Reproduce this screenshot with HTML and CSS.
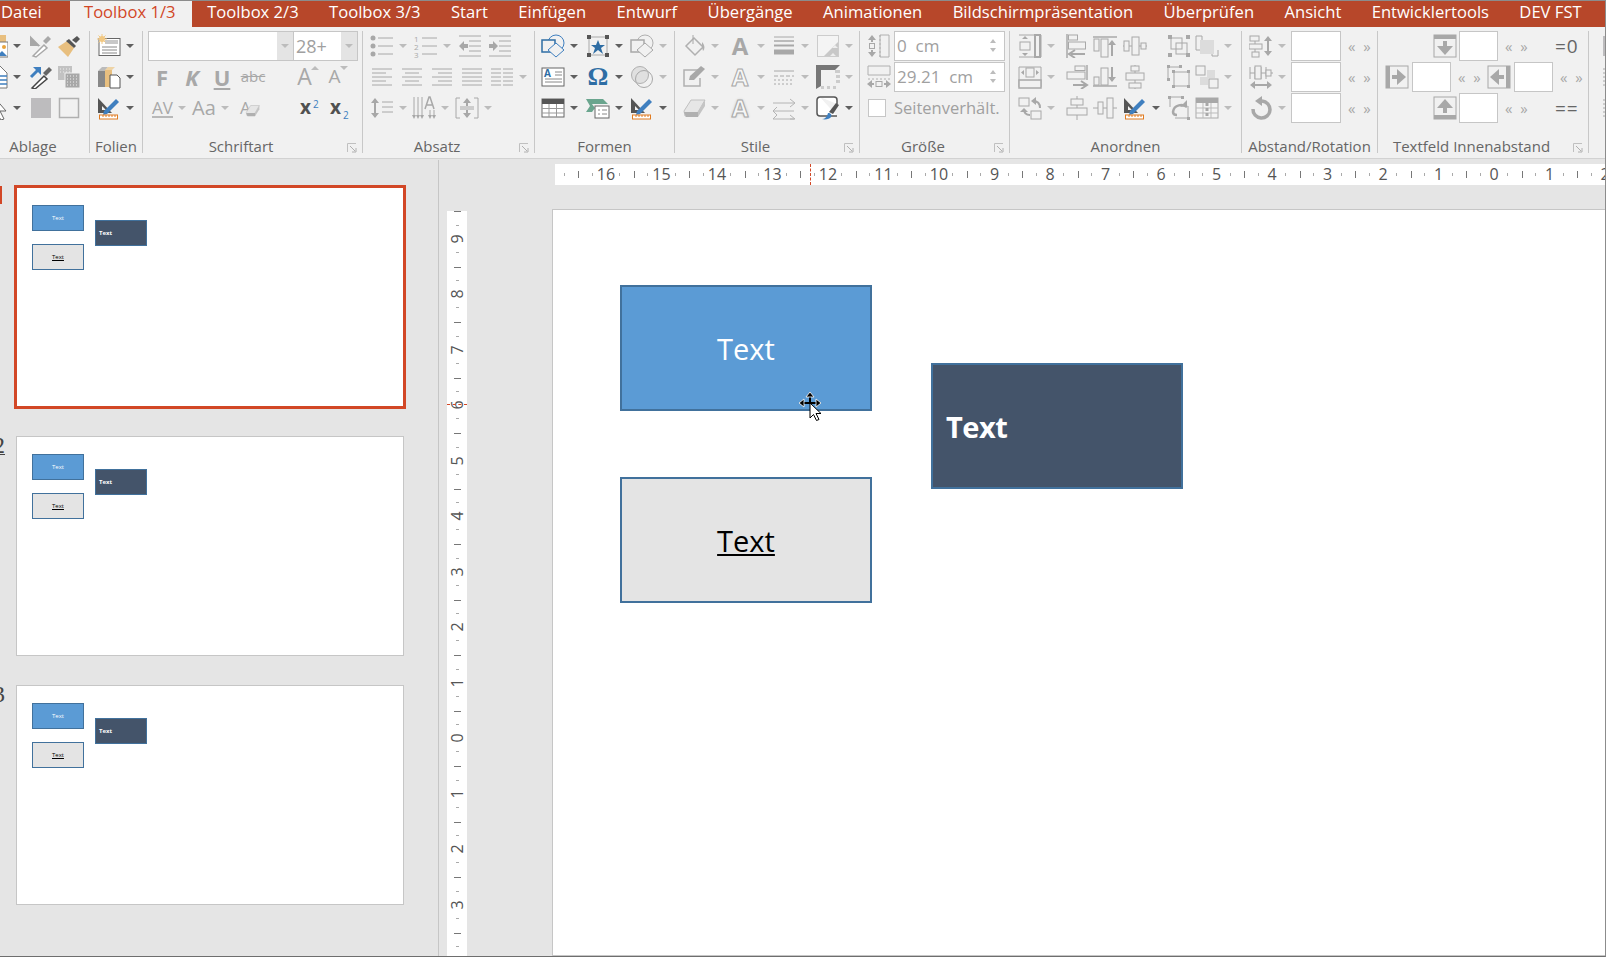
FILE: index.html
```html
<!DOCTYPE html>
<html lang="de">
<head>
    <meta charset="UTF-8">
    <title>Toolbox 1/3</title>
    <link rel="stylesheet" href="styles.css">
</head>
<body>
<svg class="defs" xmlns="http://www.w3.org/2000/svg">
    <!-- Ablage -->
    <symbol id="paste" viewBox="0 0 24 24"><rect x="15" y="1" width="7" height="7" fill="#e8bf7f"/><rect x="10" y="8" width="14" height="15" fill="#fff" stroke="#777"/><circle cx="20" cy="13" r="2" fill="#e8a33d"/><path d="M13 22l5-5 5 5z" fill="#3f7fbf"/></symbol>
    <symbol id="dropgrey" viewBox="0 0 24 24"><path d="M4 22l11-11 3 3L7 23z" fill="#fff" stroke="#a8a8a8" stroke-width="1.5"/><path d="M14 7l3-3 2-2 3 3-2 2-3 3z" fill="#a8a8a8"/><path d="M2 4v7h7L2 4zm2 2l6 6" fill="#a8a8a8" stroke="#a8a8a8" stroke-width="2"/></symbol>
    <symbol id="dropblue" viewBox="0 0 24 24"><path d="M3 23l12-12 3 3L6 24z" fill="#fff" stroke="#444" stroke-width="1.5"/><path d="M14 8l6-6 3 3-6 6z" fill="#666"/><path d="M2 12L10 4" stroke="#3f7fbf" stroke-width="3"/><path d="M4 2h8v8z" fill="#3f7fbf"/></symbol>
    <symbol id="brush" viewBox="0 0 24 24"><path d="M1 13l9-6 7 7-6 9z" fill="#e8bf7f"/><path d="M9 7l3-2 7 7-2 2z" fill="#555"/><path d="M15 6l5-4 3 3-4 4z" fill="#555"/></symbol>
    <symbol id="pattern" viewBox="0 0 24 24"><rect x="1" y="1" width="14" height="14" fill="#c2c2c2"/><rect x="8" y="8" width="15" height="15" fill="#a8a8a8" stroke="#f1f1f1"/><path d="M10 11h11M10 14h11M10 17h11M10 20h11" stroke="#eee" stroke-dasharray="1 2"/><path d="M3 4h10M3 7h10" stroke="#eee" stroke-dasharray="1 2"/></symbol>
    <symbol id="doc" viewBox="0 0 24 24"><path d="M2 1h14l7 7v15H2z" fill="#fff" stroke="#777"/><path d="M13 11h10M13 15h10M13 19h10" stroke="#3f7fbf" stroke-width="1.5"/></symbol>
    <symbol id="cursor" viewBox="0 0 24 24"><path d="M10 1l12 14-6 0 4 8-3 1-5-8-5 5z" fill="#fff" stroke="#666"/><rect x="8" y="0" width="6" height="7" fill="#777"/></symbol>
    <symbol id="sqfill" viewBox="0 0 24 24"><rect x="2" y="2" width="20" height="20" fill="#bdbcbe"/></symbol>
    <symbol id="sqout" viewBox="0 0 24 24"><rect x="2.5" y="2.5" width="19" height="19" fill="none" stroke="#b0b0b0" stroke-width="1.5"/></symbol>
    <!-- Folien -->
    <symbol id="newslide" viewBox="0 0 24 24"><rect x="2" y="4.500" width="21" height="17" fill="#fff" stroke="#666"/><rect x="8" y="6" width="13" height="4" fill="#c8c8c8"/><path d="M5 13h15M5 16h15M5 19h15" stroke="#888"/><circle cx="5" cy="5" r="3" fill="#f2c882"/><path d="M5 0v10M0 5h10M1.500 1.500l7 7M8.500 1.500l-7 7" stroke="#f2c882"/></symbol>
    <symbol id="books" viewBox="0 0 24 24"><rect x="1" y="6" width="7" height="16" fill="#888"/><path d="M1 6l4-4h6l-3 4z" fill="#bbb"/><rect x="8" y="5" width="7" height="17" fill="#e8bf7f"/><path d="M8 5l3-3h7l-3 3z" fill="#eed3a5"/><path d="M13 10h7l3 3v10H13z" fill="#fff" stroke="#555"/></symbol>
    <symbol id="rulerpen" viewBox="0 0 24 24"><path d="M1 2v15h14z" fill="#555"/><path d="M5 10v4h4z" fill="#f1f1f1"/><path d="M7 15L19 3l3 3-12 12-4 1z" fill="#3f7fbf"/><rect x="2.500" y="19" width="18" height="4" fill="#fff" stroke="#e07b20"/><path d="M6 19v2M9 19v2M12 19v2M15 19v2M18 19v2" stroke="#e07b20"/></symbol>
    <!-- Absatz -->
    <symbol id="bullets" viewBox="0 0 24 24"><circle cx="3" cy="4" r="2.500" fill="#a8a8a8"/><circle cx="3" cy="12" r="2.500" fill="#a8a8a8"/><circle cx="3" cy="20" r="2.500" fill="#a8a8a8"/><path d="M8 4h15M8 12h15M8 20h15" stroke="#a8a8a8"/></symbol>
    <symbol id="numbers" viewBox="0 0 24 24"><path d="M8 4h15M8 12h15M8 20h15" stroke="#a8a8a8"/><text x="0" y="8" class="svgnum">1</text><text x="0" y="16" class="svgnum">2</text><text x="0" y="24" class="svgnum">3</text></symbol>
    <symbol id="outdent" viewBox="0 0 24 24"><path d="M1 2h22M11 7h12M11 12h12M11 17h12M1 22h22" stroke="#a8a8a8"/><path d="M1 12l5-5v3h4v4H6v3z" fill="#a8a8a8"/></symbol>
    <symbol id="indent" viewBox="0 0 24 24"><path d="M1 2h22M11 7h12M11 12h12M11 17h12M1 22h22" stroke="#a8a8a8"/><path d="M10 12L5 7v3H1v4h4v3z" fill="#a8a8a8"/></symbol>
    <symbol id="aleft" viewBox="0 0 24 24"><path d="M2 4h20M2 8h14M2 12h20M2 16h14M2 20h20" stroke="#a8a8a8"/></symbol>
    <symbol id="acenter" viewBox="0 0 24 24"><path d="M2 4h20M5 8h14M2 12h20M5 16h14M2 20h20" stroke="#a8a8a8"/></symbol>
    <symbol id="aright" viewBox="0 0 24 24"><path d="M2 4h20M8 8h14M2 12h20M8 16h14M2 20h20" stroke="#a8a8a8"/></symbol>
    <symbol id="ajust" viewBox="0 0 24 24"><path d="M2 4h20M2 8h20M2 12h20M2 16h20M2 20h20" stroke="#a8a8a8"/></symbol>
    <symbol id="acols" viewBox="0 0 24 24"><path d="M1 4h10M13 4h10M1 8h10M13 8h10M1 12h10M13 12h10M1 16h10M13 16h10M1 20h10M13 20h10" stroke="#a8a8a8"/></symbol>
    <symbol id="linesp" viewBox="0 0 24 24"><path d="M5 3v18" stroke="#a8a8a8" stroke-width="2"/><path d="M1 7l4-5 4 5zM1 17l4 5 4-5z" fill="#a8a8a8"/><path d="M12 6h11M12 11h11M12 16h11" stroke="#a8a8a8"/></symbol>
    <symbol id="textdir" viewBox="0 0 24 24"><path d="M2 1v20M6 1v20M10 1v20M18 14v7M22 14v7" stroke="#a8a8a8"/><path d="M0 19l2 4 2-4zM4 19l2 4 2-4zM8 19l2 4 2-4zM16 19l2 4 2-4zM20 19l2 4 2-4z" fill="#a8a8a8"/><path d="M13 13l4-12h1l4 12M15 9h6" fill="none" stroke="#a8a8a8" stroke-width="1.500"/></symbol>
    <symbol id="valign" viewBox="0 0 24 24"><path d="M5 2H1v20h4M19 2h4v20h-4" fill="none" stroke="#a8a8a8"/><path d="M12 3v7M12 14v7" stroke="#a8a8a8" stroke-width="2"/><path d="M8 7l4-5 4 5zM8 17l4 5 4-5z" fill="#a8a8a8"/><path d="M5 11h14M5 13h14" stroke="#a8a8a8"/></symbol>
    <!-- Formen -->
    <symbol id="shapes" viewBox="0 0 24 24"><circle cx="15" cy="9" r="8" fill="none" stroke="#3f7fbf"/><rect x="1" y="6" width="13" height="12" fill="#f1f1f1" stroke="#2e6da4" stroke-width="1.500"/><path d="M15 9l8 7-8 7-8-7z" fill="#f1f1f1" stroke="#3f7fbf"/></symbol>
    <symbol id="star" viewBox="0 0 24 24"><rect x="3" y="3" width="18" height="18" fill="none" stroke="#aaa"/><path d="M12 6l2 5h5l-4 3 2 6-5-4-5 4 2-6-4-3h5z" fill="#2e6da4"/><path d="M1 1h4v4H1zM19 1h4v4h-4zM1 19h4v4H1zM19 19h4v4h-4z" fill="#555"/></symbol>
    <symbol id="shapesoff" viewBox="0 0 24 24"><circle cx="15" cy="9" r="8" fill="none" stroke="#b0b0b0"/><rect x="1" y="6" width="13" height="12" fill="#f1f1f1" stroke="#a8a8a8" stroke-width="1.500"/><path d="M15 9l8 7-8 7-8-7z" fill="#f1f1f1" stroke="#a8a8a8"/></symbol>
    <symbol id="textbox" viewBox="0 0 24 24"><rect x="1" y="3" width="22" height="18" fill="#fff" stroke="#666"/><path d="M14 7h7M14 10h7M4 14h17M4 17h17" stroke="#888"/><text x="3" y="12" class="svga">A</text></symbol>
    <symbol id="circles" viewBox="0 0 24 24"><circle cx="10" cy="10" r="8.500" fill="#e0e0e0" stroke="#b0b0b0"/><circle cx="14" cy="14" r="8.500" fill="none" stroke="#a8a8a8"/></symbol>
    <symbol id="table" viewBox="0 0 24 24"><rect x="1" y="3" width="22" height="18" fill="#fff" stroke="#666"/><rect x="1" y="3" width="22" height="5" fill="#555"/><path d="M1 12.500h22M1 17h22M8 8v13M15.500 8v13" stroke="#999"/></symbol>
    <symbol id="action" viewBox="0 0 24 24"><path d="M0 3h17l5 5H6l3 4-3 4H0l4-6z" fill="#6aa58e"/><rect x="9" y="10" width="14" height="12" fill="#fff" stroke="#666"/><path d="M12 14h2M16 14h5M12 18h2M16 18h5" stroke="#888"/></symbol>
    <!-- Stile -->
    <symbol id="bucket" viewBox="0 0 24 24"><path d="M12 4l9 9-8 8-9-9z" fill="#f1f1f1" stroke="#b0b0b0" stroke-width="1.500"/><path d="M11 1v9" stroke="#a8a8a8"/><path d="M20 8c3 3 3 7 1 9-1-3-1-6-1-9z" fill="#b0b0b0"/></symbol>
    <symbol id="lines" viewBox="0 0 24 24"><path d="M2 3h20" stroke="#a8a8a8"/><path d="M2 7h20" stroke="#a8a8a8" stroke-width="1.500"/><path d="M2 11.500h20" stroke="#a8a8a8" stroke-width="2"/><path d="M2 18h20" stroke="#a8a8a8" stroke-width="5"/></symbol>
    <symbol id="gradient" viewBox="0 0 24 24"><rect x="1.500" y="1.500" width="21" height="21" fill="#f4f4f4" stroke="#ccc"/><path d="M8 22l14-14v14z" fill="#c8c8c8"/><path d="M14 22l3-3 3 3zM16 14l3-3 3 3z" fill="#eee"/></symbol>
    <symbol id="pen" viewBox="0 0 24 24"><path d="M17 5H2v16h16v-8" fill="none" stroke="#b0b0b0" stroke-width="1.500"/><path d="M7 15l1-4L19 1l4 3-11 11z" fill="#a8a8a8"/></symbol>
    <symbol id="dashes" viewBox="0 0 24 24"><path d="M2 6h20" stroke="#a8a8a8"/><path d="M2 11h20" stroke="#a8a8a8" stroke-dasharray="4 2"/><path d="M2 15h20M2 19h20" stroke="#a8a8a8" stroke-dasharray="2 2"/></symbol>
    <symbol id="shadowbox" viewBox="0 0 24 24"><path d="M0 0h24l-5 5H5v16l-5 3z" fill="#777"/><path d="M19 5h5v3h-5zM20 10h4v3h-4zM20 15h4v3h-4zM5 21h3v3H5zM11 21h3v3h-3zM17 21h3v3h-3z" fill="#ccc"/></symbol>
    <symbol id="eraser" viewBox="0 0 24 24"><path d="M2 15L9 4h14l-7 12v4H3z" fill="#e6e6e6" stroke="#c0c0c0"/><path d="M2 16h14v5H4z" fill="#b0b0b0"/><path d="M16 16l7-12v6l-7 11z" fill="#c4c4c4"/></symbol>
    <symbol id="arrows" viewBox="0 0 24 24"><path d="M1 7h21M18 3l5 4-5 4M5 11L1 15l4 4M1 15h21M1 23h21M5 19l-4 4M18 19l5 4-5 0" fill="none" stroke="#b4b4b4"/></symbol>
    <symbol id="shapestyle" viewBox="0 0 24 24"><path d="M4 1h14a3 3 0 0 1 3 3v4M21 20H4a3 3 0 0 1-3-3V4a3 3 0 0 1 3-3" fill="#fff" stroke="#555" stroke-width="1.500"/><path d="M13 16l7-9 3 2-6 9z" fill="#555"/><path d="M6 23c3 0 5-2 6-6 3 0 4 2 3 4-1 2-6 3-9 2z" fill="#3f7fbf"/></symbol>
    <!-- Groesse -->
    <symbol id="sizeh" viewBox="0 0 24 24"><path d="M13 1h9v22h-9z" fill="none" stroke="#b0b0b0"/><path d="M13 1v22" stroke="#b0b0b0" stroke-dasharray="2 2"/><path d="M5 3v5M5 16v5" stroke="#a8a8a8" stroke-width="2"/><path d="M1 6l4-5 4 5zM1 18l4 5 4-5z" fill="#a8a8a8"/><rect x="2.500" y="9.500" width="5" height="5" fill="none" stroke="#a8a8a8"/></symbol>
    <symbol id="sizew" viewBox="0 0 24 24"><path d="M1 1h22v9H1z" fill="none" stroke="#b0b0b0"/><path d="M1 14h22" stroke="#b0b0b0" stroke-dasharray="2 2"/><path d="M3 19h4M17 19h4" stroke="#a8a8a8" stroke-width="2"/><path d="M5 15l-5 4 5 4zM19 15l5 4-5 4z" fill="#a8a8a8"/><rect x="9" y="16.500" width="6" height="5" fill="none" stroke="#a8a8a8"/></symbol>
    <!-- Anordnen -->
    <symbol id="an1" viewBox="0 0 24 24"><path d="M1 1h22v22H1" fill="none" stroke="#a8a8a8"/><path d="M17 1h5v22h-5z" fill="none" stroke="#a8a8a8" stroke-width="2"/><rect x="2" y="8" width="10" height="8" fill="none" stroke="#a8a8a8"/><path d="M4 5l3-3 3 3zM4 19l3 3 3-3z" fill="#a8a8a8"/></symbol>
    <symbol id="an2" viewBox="0 0 24 24"><path d="M2 0v24" stroke="#a8a8a8" stroke-width="1.500"/><rect x="3.500" y="1" width="9" height="5" fill="none" stroke="#a8a8a8"/><rect x="3.500" y="8" width="17" height="7" fill="none" stroke="#a8a8a8"/><path d="M6 20h14" stroke="#a8a8a8" stroke-width="2"/><path d="M10 16l-6 4 6 4" fill="none" stroke="#a8a8a8" stroke-width="2"/></symbol>
    <symbol id="an3" viewBox="0 0 24 24"><path d="M0 3h24" stroke="#a8a8a8" stroke-width="1.500"/><rect x="1" y="5" width="5" height="12" fill="none" stroke="#a8a8a8"/><rect x="8" y="5" width="7" height="18" fill="none" stroke="#a8a8a8"/><path d="M19 8v14" stroke="#a8a8a8" stroke-width="2"/><path d="M15 11l4-5 4 5z" fill="#a8a8a8"/></symbol>
    <symbol id="an4" viewBox="0 0 24 24"><path d="M0 12h24" stroke="#a8a8a8"/><rect x="1" y="7" width="5" height="10" fill="#f1f1f1" stroke="#a8a8a8"/><rect x="9" y="3" width="7" height="18" fill="#f1f1f1" stroke="#a8a8a8"/><rect x="18" y="9" width="5" height="6" fill="#f1f1f1" stroke="#a8a8a8"/></symbol>
    <symbol id="an5" viewBox="0 0 24 24"><rect x="1" y="1" width="4" height="4" fill="#a8a8a8"/><rect x="19" y="1" width="4" height="4" fill="#a8a8a8"/><rect x="1" y="19" width="4" height="4" fill="#a8a8a8"/><rect x="19" y="19" width="4" height="4" fill="#a8a8a8"/><rect x="4" y="4" width="11" height="11" fill="none" stroke="#a8a8a8"/><rect x="9" y="9" width="11" height="11" fill="none" stroke="#a8a8a8"/></symbol>
    <symbol id="an6" viewBox="0 0 24 24"><path d="M7 8V2H1v14h5M17 16v6h6v-6" fill="none" stroke="#a8a8a8"/><rect x="5" y="6" width="14" height="14" fill="#dcdcdc"/></symbol>
    <symbol id="an7" viewBox="0 0 24 24"><path d="M1 2h22M1 2v20M23 2v20" fill="none" stroke="#a8a8a8"/><rect x="1" y="15" width="22" height="8" fill="#f1f1f1" stroke="#a8a8a8" stroke-width="1.500"/><rect x="8" y="3" width="8" height="9" fill="none" stroke="#a8a8a8"/><path d="M6 5L3 7.500 6 10zM18 5l3 2.500L18 10z" fill="#a8a8a8"/></symbol>
    <symbol id="an8" viewBox="0 0 24 24"><path d="M22 0v15" stroke="#a8a8a8" stroke-width="1.500"/><rect x="10" y="1" width="10" height="4.500" fill="none" stroke="#a8a8a8"/><rect x="2" y="7" width="18" height="7" fill="none" stroke="#a8a8a8"/><path d="M8 20h14" stroke="#a8a8a8" stroke-width="2"/><path d="M16 16l6 4-6 4" fill="none" stroke="#a8a8a8" stroke-width="2"/></symbol>
    <symbol id="an9" viewBox="0 0 24 24"><path d="M0 21h24" stroke="#a8a8a8" stroke-width="1.500"/><rect x="1" y="12" width="5" height="8" fill="none" stroke="#a8a8a8"/><rect x="8" y="3" width="7" height="17" fill="none" stroke="#a8a8a8"/><path d="M19 2v14" stroke="#a8a8a8" stroke-width="2"/><path d="M15 12l4 5 4-5z" fill="#a8a8a8"/></symbol>
    <symbol id="an10" viewBox="0 0 24 24"><path d="M12 0v24" stroke="#a8a8a8"/><rect x="8" y="1" width="8" height="5" fill="#f1f1f1" stroke="#a8a8a8"/><rect x="3" y="8" width="18" height="7" fill="#f1f1f1" stroke="#a8a8a8"/><rect x="6" y="18" width="12" height="5" fill="#f1f1f1" stroke="#a8a8a8"/></symbol>
    <symbol id="an11" viewBox="0 0 24 24"><path d="M1 2v12M1 2h12" fill="none" stroke="#a8a8a8"/><rect x="7" y="7" width="15" height="14" fill="none" stroke="#a8a8a8"/><rect x="0" y="0" width="3" height="3" fill="#a8a8a8"/><rect x="12" y="0" width="3" height="3" fill="#a8a8a8"/><rect x="0" y="13" width="3" height="3" fill="#a8a8a8"/><rect x="5" y="5" width="3" height="3" fill="#a8a8a8"/><rect x="20" y="5" width="3" height="3" fill="#a8a8a8"/><rect x="5" y="20" width="3" height="3" fill="#a8a8a8"/><rect x="20" y="20" width="3" height="3" fill="#a8a8a8"/></symbol>
    <symbol id="an12" viewBox="0 0 24 24"><rect x="1" y="1" width="9" height="9" fill="none" stroke="#a8a8a8"/><rect x="12" y="5" width="8" height="8" fill="#dcdcdc"/><rect x="5" y="12" width="8" height="8" fill="#dcdcdc"/><rect x="14" y="14" width="9" height="9" fill="none" stroke="#a8a8a8"/></symbol>
    <symbol id="an13" viewBox="0 0 24 24"><rect x="1" y="2" width="10" height="8" fill="none" stroke="#a8a8a8"/><rect x="13" y="15" width="10" height="8" fill="none" stroke="#a8a8a8"/><path d="M22 12c0-5-3-7-7-7M6 13c0 4 2 6 6 6" fill="none" stroke="#a8a8a8" stroke-width="2"/><path d="M18 1l-5 4 5 4zM2 16h8l-4-4z" fill="#a8a8a8"/></symbol>
    <symbol id="an14" viewBox="0 0 24 24"><path d="M12 0v24" stroke="#a8a8a8"/><rect x="6" y="3" width="12" height="6" fill="#f1f1f1" stroke="#a8a8a8"/><rect x="2" y="12" width="20" height="7" fill="#f1f1f1" stroke="#a8a8a8"/></symbol>
    <symbol id="an15" viewBox="0 0 24 24"><path d="M0 12h24" stroke="#a8a8a8"/><rect x="5" y="6" width="5" height="12" fill="#f1f1f1" stroke="#a8a8a8"/><rect x="14" y="2" width="6" height="20" fill="#f1f1f1" stroke="#a8a8a8"/></symbol>
    <symbol id="an16" viewBox="0 0 24 24"><path d="M3 1h12M3 1v10M21 10v12H8" fill="none" stroke="#a8a8a8"/><path d="M20 11c-4-3-13-3-14 5 0 2 2 3 4 3" fill="none" stroke="#a8a8a8" stroke-width="2.500"/><path d="M13 11l7-1v-6z" fill="#a8a8a8"/><rect x="1" y="0" width="3" height="3" fill="#a8a8a8"/><rect x="14" y="0" width="3" height="3" fill="#a8a8a8"/><rect x="20" y="21" width="3" height="3" fill="#a8a8a8"/></symbol>
    <symbol id="an17" viewBox="0 0 24 24"><rect x="1" y="2" width="22" height="20" fill="#f4f4f4" stroke="#aaa"/><rect x="1" y="2" width="22" height="5" fill="#a8a8a8"/><path d="M1 12h22M1 17h22M8 7v15M16 7v15" stroke="#bbb"/><path d="M12 7v15" stroke="#a8a8a8" stroke-width="3" stroke-dasharray="3 2"/></symbol>
    <!-- Abstand/Rotation -->
    <symbol id="sp1" viewBox="0 0 24 24"><rect x="1" y="2" width="9" height="5" fill="none" stroke="#a8a8a8"/><rect x="0" y="10" width="13" height="5" fill="none" stroke="#a8a8a8"/><rect x="3" y="18" width="7" height="5" fill="none" stroke="#a8a8a8"/><path d="M6 7v3M6 15v3" stroke="#a8a8a8"/><path d="M19 4v16" stroke="#a8a8a8" stroke-width="2"/><path d="M15 7l4-5 4 5zM15 17l4 5 4-5z" fill="#a8a8a8"/></symbol>
    <symbol id="sp2" viewBox="0 0 24 24"><path d="M1 2v12M6 2v12M12 2v12M17 2v12M1 8h23" stroke="#a8a8a8" fill="none"/><rect x="6" y="1" width="6" height="13" fill="#f1f1f1" stroke="#a8a8a8"/><rect x="17" y="5" width="5" height="6" fill="#f1f1f1" stroke="#a8a8a8"/><path d="M3 20h18" stroke="#a8a8a8" stroke-width="2"/><path d="M6 16l-5 4 5 4zM18 16l5 4-5 4z" fill="#a8a8a8"/></symbol>
    <symbol id="rotate" viewBox="0 0 24 24"><path d="M13 5a8.500 8.500 0 1 1-9 8" fill="none" stroke="#a8a8a8" stroke-width="3.500"/><path d="M13 0v10l-7-5z" fill="#a8a8a8"/></symbol>
    <!-- Textfeld -->
    <symbol id="pdown" viewBox="0 0 24 24"><rect x="1" y="1" width="22" height="22" fill="#f1f1f1" stroke="#a8a8a8"/><rect x="1" y="1" width="22" height="4" fill="#a8a8a8"/><path d="M12 7v9" stroke="#a8a8a8" stroke-width="4"/><path d="M4 12l8 9 8-9" fill="#a8a8a8"/></symbol>
    <symbol id="pup" viewBox="0 0 24 24"><rect x="1" y="1" width="22" height="22" fill="#f1f1f1" stroke="#a8a8a8"/><rect x="1" y="19" width="22" height="4" fill="#a8a8a8"/><path d="M12 8v9" stroke="#a8a8a8" stroke-width="4"/><path d="M4 12l8-9 8 9" fill="#a8a8a8"/></symbol>
    <symbol id="pright" viewBox="0 0 24 24"><rect x="1" y="1" width="22" height="22" fill="#f1f1f1" stroke="#a8a8a8"/><rect x="1" y="1" width="4" height="22" fill="#a8a8a8"/><path d="M7 12h9" stroke="#a8a8a8" stroke-width="4"/><path d="M12 4l9 8-9 8" fill="#a8a8a8"/></symbol>
    <symbol id="pleft" viewBox="0 0 24 24"><rect x="1" y="1" width="22" height="22" fill="#f1f1f1" stroke="#a8a8a8"/><rect x="19" y="1" width="4" height="22" fill="#a8a8a8"/><path d="M8 12h9" stroke="#a8a8a8" stroke-width="4"/><path d="M12 4l-9 8 9 8" fill="#a8a8a8"/></symbol>
    <symbol id="launch" viewBox="0 0 10 10"><path d="M.5 9V.5H9" fill="none" stroke="#c0c0c0"/><path d="M3 3l5 5M9 5v4H5" fill="none" stroke="#b0b0b0"/></symbol>
</svg>

<div class="app">
    <!-- Tabs -->
    <div class="tabs">
        <span class="tab first">Datei</span>
        <span class="tab active">Toolbox 1/3</span>
        <span class="tab">Toolbox 2/3</span>
        <span class="tab">Toolbox 3/3</span>
        <span class="tab">Start</span>
        <span class="tab">Einfügen</span>
        <span class="tab">Entwurf</span>
        <span class="tab">Übergänge</span>
        <span class="tab">Animationen</span>
        <span class="tab">Bildschirmpräsentation</span>
        <span class="tab">Überprüfen</span>
        <span class="tab">Ansicht</span>
        <span class="tab">Entwicklertools</span>
        <span class="tab">DEV FST</span>
    </div>

    <!-- Ribbon -->
    <div class="ribbon">
        <div class="grp g-ablage">
            <div class="r"><span class="b"><svg class="i"><use href="#paste"/></svg><i class="c"></i></span><span class="b"><svg class="i"><use href="#dropgrey"/></svg></span><span class="b"><svg class="i"><use href="#brush"/></svg></span></div>
            <div class="r"><span class="b"><svg class="i"><use href="#doc"/></svg><i class="c"></i></span><span class="b"><svg class="i"><use href="#dropblue"/></svg></span><span class="b"><svg class="i"><use href="#pattern"/></svg></span></div>
            <div class="r"><span class="b"><svg class="i"><use href="#cursor"/></svg><i class="c"></i></span><span class="b"><svg class="i"><use href="#sqfill"/></svg></span><span class="b"><svg class="i"><use href="#sqout"/></svg></span></div>
            <div class="label ls">Ablage</div>
        </div>

        <div class="grp g-folien">
            <div class="r"><span class="b"><svg class="i"><use href="#newslide"/></svg><i class="c"></i></span></div>
            <div class="r"><span class="b"><svg class="i"><use href="#books"/></svg><i class="c"></i></span></div>
            <div class="r"><span class="b"><svg class="i"><use href="#rulerpen"/></svg><i class="c"></i></span></div>
            <div class="label">Folien</div>
        </div>

        <div class="grp g-schrift">
            <div class="r combo-row">
                <div class="combo wide"><span class="combo-text"></span><span class="combo-arrow"><i class="c off"></i></span></div>
                <div class="combo size"><span class="combo-text">28+</span><span class="combo-arrow"><i class="c off"></i></span></div>
            </div>
            <div class="r row2">
                <span class="b"><span class="t bold f22">F</span></span>
                <span class="b"><span class="t bold ital f22">K</span></span>
                <span class="b"><span class="t bold under f22">U</span></span>
                <span class="b"><span class="t strike f15">abc</span></span>
                <span></span>
                <span class="b"><span class="t f23">A</span><i class="c-up"></i></span>
                <span class="b"><span class="t f19">A</span><i class="c-down"></i></span>
            </div>
            <div class="r row3">
                <span class="b"><span class="t av f17">AV</span><i class="c off"></i></span>
                <span class="b"><span class="t f20">Aa</span><i class="c off"></i></span>
                <span class="b"><span class="t f17">A</span><svg class="erase-mini"><use href="#eraser"/></svg></span>
                <span class="b"><span class="t bold dark f19">x</span><sup class="idx">2</sup></span>
                <span class="b"><span class="t bold dark f19">x</span><sub class="idx">2</sub></span>
            </div>
            <div class="label ls">Schriftart</div>
            <svg class="launch"><use href="#launch"/></svg>
        </div>

        <div class="grp g-absatz">
            <div class="r row1">
                <span class="b"><svg class="i"><use href="#bullets"/></svg><i class="c off"></i></span>
                <span class="b"><svg class="i"><use href="#numbers"/></svg><i class="c off"></i></span>
                <span class="b"><svg class="i"><use href="#outdent"/></svg></span>
                <span class="b"><svg class="i"><use href="#indent"/></svg></span>
            </div>
            <div class="r row2">
                <span class="b"><svg class="i"><use href="#aleft"/></svg></span>
                <span class="b"><svg class="i"><use href="#acenter"/></svg></span>
                <span class="b"><svg class="i"><use href="#aright"/></svg></span>
                <span class="b"><svg class="i"><use href="#ajust"/></svg></span>
                <span class="b"><svg class="i"><use href="#acols"/></svg><i class="c off"></i></span>
            </div>
            <div class="r row3">
                <span class="b"><svg class="i"><use href="#linesp"/></svg><i class="c off"></i></span>
                <span class="b"><svg class="i"><use href="#textdir"/></svg><i class="c off"></i></span>
                <span class="b"><svg class="i"><use href="#valign"/></svg><i class="c off"></i></span>
            </div>
            <div class="label ls">Absatz</div>
            <svg class="launch"><use href="#launch"/></svg>
        </div>

        <div class="grp g-formen">
            <div class="r"><span class="b"><svg class="i"><use href="#shapes"/></svg><i class="c"></i></span><span class="b"><svg class="i"><use href="#star"/></svg><i class="c"></i></span><span class="b"><svg class="i"><use href="#shapesoff"/></svg><i class="c off"></i></span></div>
            <div class="r"><span class="b"><svg class="i"><use href="#textbox"/></svg><i class="c"></i></span><span class="b"><span class="omega">Ω</span><i class="c"></i></span><span class="b"><svg class="i"><use href="#circles"/></svg><i class="c off"></i></span></div>
            <div class="r"><span class="b"><svg class="i"><use href="#table"/></svg><i class="c"></i></span><span class="b"><svg class="i"><use href="#action"/></svg><i class="c"></i></span><span class="b"><svg class="i"><use href="#rulerpen"/></svg><i class="c"></i></span></div>
            <div class="label">Formen</div>
        </div>

        <div class="grp g-stile">
            <div class="r"><span class="b"><svg class="i"><use href="#bucket"/></svg><i class="c off"></i></span><span class="b"><span class="bigA solid">A</span><i class="c off"></i></span><span class="b"><svg class="i"><use href="#lines"/></svg><i class="c off"></i></span><span class="b"><svg class="i"><use href="#gradient"/></svg><i class="c off"></i></span></div>
            <div class="r"><span class="b"><svg class="i"><use href="#pen"/></svg><i class="c off"></i></span><span class="b"><span class="bigA outline">A</span><i class="c off"></i></span><span class="b"><svg class="i"><use href="#dashes"/></svg><i class="c off"></i></span><span class="b"><svg class="i"><use href="#shadowbox"/></svg><i class="c off"></i></span></div>
            <div class="r"><span class="b"><svg class="i"><use href="#eraser"/></svg><i class="c off"></i></span><span class="b"><span class="bigA outline glow">A</span><i class="c off"></i></span><span class="b"><svg class="i"><use href="#arrows"/></svg><i class="c off"></i></span><span class="b"><svg class="i"><use href="#shapestyle"/></svg><i class="c"></i></span></div>
            <div class="label ls">Stile</div>
            <svg class="launch"><use href="#launch"/></svg>
        </div>

        <div class="grp g-groesse">
            <div class="r"><span class="b"><svg class="i"><use href="#sizeh"/></svg></span><div class="spin"><span>0&nbsp;&nbsp;cm</span><span class="spin-btns"><i class="c-up off"></i><i class="c off"></i></span></div></div>
            <div class="r"><span class="b"><svg class="i"><use href="#sizew"/></svg></span><div class="spin"><span>29.21&nbsp;&nbsp;cm</span><span class="spin-btns"><i class="c-up off"></i><i class="c off"></i></span></div></div>
            <div class="r"><span class="b"><span class="check"></span></span><span class="keep">Seitenverhält.</span></div>
            <div class="label ls">Größe</div>
            <svg class="launch"><use href="#launch"/></svg>
        </div>

        <div class="grp g-anordnen">
            <div class="r"><span class="b"><svg class="i"><use href="#an1"/></svg><i class="c off"></i></span><span class="b"><svg class="i"><use href="#an2"/></svg></span><span class="b"><svg class="i"><use href="#an3"/></svg></span><span class="b"><svg class="i"><use href="#an4"/></svg></span><span class="b"><svg class="i"><use href="#an5"/></svg></span><span class="b"><svg class="i"><use href="#an6"/></svg><i class="c off"></i></span></div>
            <div class="r"><span class="b"><svg class="i"><use href="#an7"/></svg><i class="c off"></i></span><span class="b"><svg class="i"><use href="#an8"/></svg></span><span class="b"><svg class="i"><use href="#an9"/></svg></span><span class="b"><svg class="i"><use href="#an10"/></svg></span><span class="b"><svg class="i"><use href="#an11"/></svg></span><span class="b"><svg class="i"><use href="#an12"/></svg><i class="c off"></i></span></div>
            <div class="r"><span class="b"><svg class="i"><use href="#an13"/></svg><i class="c off"></i></span><span class="b"><svg class="i"><use href="#an14"/></svg></span><span class="b"><svg class="i"><use href="#an15"/></svg></span><span class="b"><svg class="i"><use href="#rulerpen"/></svg><i class="c"></i></span><span class="b"><svg class="i"><use href="#an16"/></svg></span><span class="b"><svg class="i"><use href="#an17"/></svg><i class="c off"></i></span></div>
            <div class="label">Anordnen</div>
        </div>

        <div class="grp g-abstand">
            <div class="r"><span class="b"><svg class="i"><use href="#sp1"/></svg><i class="c off"></i></span><span class="box"></span><span class="step">«&nbsp;&nbsp;»</span></div>
            <div class="r"><span class="b"><svg class="i"><use href="#sp2"/></svg><i class="c off"></i></span><span class="box"></span><span class="step">«&nbsp;&nbsp;»</span></div>
            <div class="r"><span class="b"><svg class="i"><use href="#rotate"/></svg><i class="c off"></i></span><span class="box"></span><span class="step">«&nbsp;&nbsp;»</span></div>
            <div class="label">Abstand/Rotation</div>
        </div>

        <div class="grp g-textfeld">
            <div class="r row-a"><svg class="i"><use href="#pdown"/></svg><span class="box"></span><span class="step">«&nbsp;&nbsp;»</span><span class="eq">=0</span></div>
            <div class="r row-b"><svg class="i"><use href="#pright"/></svg><span class="box"></span><span class="step">«&nbsp;&nbsp;»</span><svg class="i"><use href="#pleft"/></svg><span class="box"></span><span class="step">«&nbsp;&nbsp;»</span></div>
            <div class="r row-a"><svg class="i"><use href="#pup"/></svg><span class="box"></span><span class="step">«&nbsp;&nbsp;»</span><span class="eq">==</span></div>
            <div class="label ls">Textfeld Innenabstand</div>
            <svg class="launch"><use href="#launch"/></svg>
        </div>

        <div class="grp g-rest">
            <div class="r"><svg class="i"><use href="#sqfill"/></svg></div>
            <div class="r"><svg class="i"><use href="#aleft"/></svg></div>
            <div class="r"><svg class="i"><use href="#aleft"/></svg></div>
        </div>
    </div>

    <div class="main">
        <!-- Folien-Vorschau -->
        <div class="pane">
            <div class="thumb sel">
                <span class="num cur"></span>
                <div class="shape blue mini s1">Text</div>
                <div class="shape dark mini s2">Text</div>
                <div class="shape grey mini s3">Text</div>
            </div>
            <div class="thumb">
                <span class="num under">2</span>
                <div class="shape blue mini s1">Text</div>
                <div class="shape dark mini s2">Text</div>
                <div class="shape grey mini s3">Text</div>
            </div>
            <div class="thumb">
                <span class="num">3</span>
                <div class="shape blue mini s1">Text</div>
                <div class="shape dark mini s2">Text</div>
                <div class="shape grey mini s3">Text</div>
            </div>
        </div>

        <!-- Arbeitsbereich -->
        <div class="editor">
            <div class="hruler">
                <div class="hruler-track">
                    <span class="tick"></span><span class="tick">16</span><span class="tick">15</span><span class="tick">14</span><span class="tick">13</span><span class="tick">12</span><span class="tick">11</span><span class="tick">10</span><span class="tick">9</span><span class="tick">8</span><span class="tick">7</span><span class="tick">6</span><span class="tick">5</span><span class="tick">4</span><span class="tick">3</span><span class="tick">2</span><span class="tick">1</span><span class="tick">0</span><span class="tick">1</span><span class="tick">2</span>
                </div>
                <i class="hmark"></i>
            </div>
            <div class="work">
                <div class="vruler">
                    <span class="vtick"><b>9</b></span><span class="vtick"><b>8</b></span><span class="vtick"><b>7</b></span><span class="vtick"><b>6</b></span><span class="vtick"><b>5</b></span><span class="vtick"><b>4</b></span><span class="vtick"><b>3</b></span><span class="vtick"><b>2</b></span><span class="vtick"><b>1</b></span><span class="vtick"><b>0</b></span><span class="vtick"><b>1</b></span><span class="vtick"><b>2</b></span><span class="vtick"><b>3</b></span><span class="vtick"></span>
                    <i class="vmark"></i>
                </div>
                <div class="slide">
                    <div class="shape blue big b1">Text</div>
                    <div class="shape dark big b2">Text</div>
                    <div class="shape grey big b3">Text</div>
                    <svg class="pointer" width="24" height="34" viewBox="0 0 24 34">
                        <path d="M12 5v7M5 12h14" stroke="#000" stroke-width="2"/>
                        <path d="M12 1l4 5H8zM1 12l5-4v8zM23 12l-5-4v8z" fill="#000" stroke="#fff" stroke-width=".8"/>
                        <path d="M12 12v15l3.500-3.500 3 6 2.500-1-3-6h5z" fill="#fff" stroke="#000"/>
                    </svg>
                </div>
            </div>
        </div>
    </div>
</div>
</body>
</html>
```

FILE: styles.css
```css
html, body {
    margin: 0;
    padding: 0;
}
body {
    width: 1606px;
    height: 957px;
    overflow: hidden;
    font-family: "Open Sans", "Noto Sans", sans-serif;
    background-color: #e5e5e5;
}
.defs {
    display: none;
}
.svgnum {
    font-family: "Open Sans", sans-serif;
    font-size: 8px;
    fill: #a8a8a8;
}
.svga {
    font-family: "Open Sans", sans-serif;
    font-size: 10px;
    font-weight: bold;
    fill: #2e6da4;
}
.app {
    box-sizing: border-box;
    width: 1606px;
    height: 957px;
    display: flex;
    flex-direction: column;
    border-top: 1px solid #8c8c8c;
    border-bottom: 1px solid #6e6e6e;
    border-right: 1px solid #8c8c8c;
    overflow: hidden;
}

/* Tabs */
.tabs {
    flex: none;
    height: 26px;
    display: flex;
    background-color: #b7472a;
    white-space: nowrap;
}
.tab {
    padding: 0 15.2px;
    color: #fff;
    font-size: 16.6px;
    line-height: 22px;
}
.tab.first {
    padding: 0;
    margin-left: 1px;
    width: 69px;
}
.tab.active {
    box-sizing: border-box;
    width: 122px;
    background-color: #f1f1f1;
    color: #d24726;
    padding: 0 0 0 14px;
}

/* Ribbon */
.ribbon {
    flex: none;
    height: 131px;
    display: flex;
    background-color: #f1f1f1;
    border-bottom: 1px solid #d2d2d2;
    overflow: hidden;
}
.grp {
    flex: none;
    box-sizing: border-box;
    position: relative;
    height: 122px;
    margin-top: 4px;
    border-right: 1px solid #c8c8c8;
}
.grp > .r:first-child {
    margin-top: -1px;
}
.r {
    height: 31px;
    display: grid;
    align-items: center;
    justify-items: start;
}
.b {
    display: flex;
    align-items: center;
    height: 30px;
}
.i {
    flex: none;
    width: 24px;
    height: 24px;
}
.c, .c-up, .c-down {
    display: inline-block;
    flex: none;
    width: 0;
    height: 0;
    margin-left: 5px;
    border-left: 4px solid transparent;
    border-right: 4px solid transparent;
}
.c {
    border-top: 4px solid #5f5f5f;
}
.c.off {
    border-top-color: #bcbcbc;
}
.c-up {
    border-bottom: 4px solid #bcbcbc;
    margin-left: -1px;
    margin-top: -18px;
}
.c-down {
    border-top: 4px solid #bcbcbc;
    margin-left: -1px;
    margin-top: -18px;
}
.label {
    position: absolute;
    left: 0;
    right: 0;
    top: 105px;
    line-height: 20px;
    text-align: center;
    font-size: 15px;
    color: #666;
    white-space: nowrap;
}
.label.ls {
    right: 23px;
}
.launch {
    position: absolute;
    right: 5px;
    top: 112px;
    width: 10px;
    height: 10px;
}

/* Gruppen: Spaltenbreiten */
.g-ablage {
    width: 90px;
}
.g-ablage .r {
    margin-left: -16px;
    grid-template-columns: 45px 28px 28px;
}
.g-folien {
    width: 53px;
    padding-left: 7px;
}
.g-schrift {
    width: 220px;
    padding-left: 9px;
}
.g-schrift .combo-row {
    display: flex;
    margin-left: -4px;
}
.g-schrift .row2 {
    margin-left: -5px;
    grid-template-columns: 30px 30px 30px 32px 24px 30px 30px;
    justify-items: center;
}
.g-schrift .row3 {
    grid-template-columns: 40px 48px 60px 30px 30px;
}
.g-absatz {
    width: 172px;
    padding-left: 7px;
}
.g-absatz .row1 {
    grid-template-columns: 44px 44px 30px 30px;
}
.g-absatz .row2 {
    grid-template-columns: 30px 30px 30px 30px 40px;
}
.g-absatz .row3 {
    grid-template-columns: 42px 43px 40px;
}
.g-formen {
    width: 140px;
    padding-left: 6px;
}
.g-formen .r {
    grid-template-columns: 45px 44px 45px;
}
.g-stile {
    width: 185px;
    padding-left: 7px;
}
.g-stile .r {
    grid-template-columns: 46px 44px 44px 40px;
}
.g-groesse {
    width: 150px;
    padding-left: 7px;
}
.g-groesse .r {
    grid-template-columns: 27px 111px;
}
.g-anordnen {
    width: 232px;
    padding-left: 8px;
}
.g-anordnen .r {
    grid-template-columns: 47px 28px 30px 44px 28px 40px;
}
.g-abstand {
    width: 136px;
    padding-left: 7px;
}
.g-abstand .r {
    grid-template-columns: 42px 51px auto;
}
.g-abstand .box {
    width: 50px;
}
.g-textfeld {
    width: 211px;
    padding-left: 7px;
}
.g-textfeld .row-a {
    padding-left: 48px;
    grid-template-columns: 26px 40px 56px auto;
}
.g-textfeld .row-b {
    grid-template-columns: 27px 40px 35px 27px 40px auto;
}
.g-rest {
    flex: 1;
    border-right: none;
    padding-left: 12px;
}

/* Eingabefelder */
.combo {
    box-sizing: border-box;
    height: 30px;
    display: flex;
    background-color: #fff;
    border: 1px solid #c6c6c6;
}
.combo.wide {
    width: 146px;
}
.combo.size {
    width: 65px;
    margin-left: -1px;
}
.combo-text {
    flex: 1;
    padding-left: 2px;
    font-size: 18px;
    line-height: 28px;
    color: #a0a0a0;
}
.combo-arrow {
    width: 16px;
    display: flex;
    align-items: center;
    justify-content: center;
    background-color: #e4e4e4;
}
.combo-arrow .c {
    margin: 0;
}
.box {
    box-sizing: border-box;
    display: block;
    width: 39px;
    height: 30px;
    background-color: #fff;
    border: 1px solid #c6c6c6;
}
.spin {
    box-sizing: border-box;
    width: 111px;
    height: 30px;
    display: flex;
    align-items: center;
    justify-content: space-between;
    padding: 0 8px 0 2px;
    background-color: #fff;
    border: 1px solid #c6c6c6;
    font-size: 17px;
    color: #a0a0a0;
    white-space: nowrap;
}
.spin-btns {
    display: flex;
    flex-direction: column;
    gap: 5px;
}
.spin-btns .c, .spin-btns .c-up {
    margin: 0;
    border-left-width: 3px;
    border-right-width: 3px;
}
.check {
    display: block;
    box-sizing: border-box;
    width: 18px;
    height: 18px;
    margin-left: 1px;
    background-color: #fff;
    border: 1px solid #c6c6c6;
}
.keep {
    font-size: 16.500px;
    color: #a0a0a0;
    white-space: nowrap;
}
.step {
    font-size: 15px;
    color: #a8a8a8;
    padding-left: 6px;
    white-space: nowrap;
}
.eq {
    font-size: 19px;
    letter-spacing: 1px;
    color: #666;
    white-space: nowrap;
}

/* Text-Icons */
.t {
    color: #a8a8a8;
    line-height: 1;
}
.bold {
    font-weight: bold;
}
.ital {
    font-style: italic;
}
.under {
    text-decoration: underline;
}
.strike {
    text-decoration: line-through;
}
.dark {
    color: #505050;
}
.f15 { font-size: 15px; }
.f17 { font-size: 17px; }
.f19 { font-size: 19px; }
.f20 { font-size: 20px; }
.f22 { font-size: 22px; }
.f23 { font-size: 23px; }
.av {
    border-bottom: 2px solid #b8b8b8;
    margin-top: 2px;
}
.erase-mini {
    width: 15px;
    height: 15px;
    margin: 6px 0 0 -6px;
}
.idx {
    font-size: 10px;
    color: #3f7fbf;
    line-height: 1;
    margin-left: 2px;
}
sup.idx {
    align-self: flex-start;
    margin-top: 6px;
}
sub.idx {
    align-self: flex-end;
    margin-bottom: 3px;
}
.omega {
    width: 24px;
    text-align: center;
    font-family: "Liberation Serif", serif;
    font-size: 26px;
    font-weight: bold;
    line-height: 24px;
    color: #2e6da4;
}
.bigA {
    width: 24px;
    text-align: center;
    font-weight: bold;
    font-size: 24px;
    line-height: 24px;
}
.solid {
    color: #a8a8a8;
}
.outline {
    color: #f6f6f6;
    -webkit-text-stroke: 1px #a8a8a8;
}
.glow {
    text-shadow: 0 0 3px #b8b8b8;
}

/* Hauptbereich */
.main {
    flex: 1;
    display: flex;
    min-height: 0;
    margin-top: 1px;
}
.pane {
    flex: none;
    box-sizing: border-box;
    width: 439px;
    padding-top: 27px;
    display: flex;
    flex-direction: column;
    gap: 29px;
    border-right: 1px solid #c6c6c6;
    overflow: hidden;
}
.thumb {
    flex: none;
    box-sizing: border-box;
    position: relative;
    width: 388px;
    height: 220px;
    margin-left: 16px;
    background-color: #fff;
    border: 1px solid #c6c6c6;
}
.thumb.sel {
    border: 1px solid #d24726;
    outline: 2px solid #d24726;
}
.num {
    position: absolute;
    left: -24px;
    top: -4px;
    width: 13px;
    font-family: "Liberation Serif", serif;
    font-size: 24px;
    line-height: 24px;
    color: #444;
}
.num.under {
    text-decoration: underline;
    text-decoration-thickness: 1px;
}
.num.cur {
    left: -17px;
    top: -2px;
    width: 2px;
    height: 18px;
    background-color: #d24726;
}
.shape {
    box-sizing: border-box;
    position: absolute;
    display: flex;
    align-items: center;
    justify-content: center;
    border-style: solid;
    border-color: #41719c;
}
.blue {
    background-color: #5b9bd5;
    color: #fff;
}
.dark.shape {
    background-color: #44546a;
    color: #fff;
    font-weight: bold;
    justify-content: flex-start;
}
.grey {
    background-color: #e4e4e4;
    color: #000;
    text-decoration: underline;
}
.mini {
    width: 52px;
    height: 26px;
    border-width: 1px;
    font-size: 6px;
}
.mini.dark {
    padding-left: 3px;
}
.s1 { left: 15px; top: 17px; }
.s2 { left: 78px; top: 32px; }
.s3 { left: 15px; top: 56px; }

.editor {
    flex: 1;
    min-width: 0;
    display: flex;
    flex-direction: column;
}
.hruler {
    flex: none;
    position: relative;
    height: 21px;
    margin: 4px 0 0 116px;
    background-color: #fff;
    overflow: hidden;
}
.hruler-track {
    display: flex;
    margin-left: -32.25px;
}
.tick {
    flex: none;
    width: 55.5px;
    height: 21px;
    line-height: 21px;
    text-align: center;
    font-size: 16px;
    color: #555;
    background:
        linear-gradient(#777, #777) 0 50% / 1px 7px no-repeat,
        linear-gradient(#aaa, #aaa) 25% 50% / 1px 3px no-repeat,
        linear-gradient(#aaa, #aaa) 75% 50% / 1px 3px no-repeat;
}
.hmark {
    position: absolute;
    left: 255px;
    top: 0;
    height: 21px;
    border-left: 1px dashed #d24726;
}
.work {
    flex: 1;
    min-height: 0;
    display: flex;
    margin-top: 24px;
}
.vruler {
    flex: none;
    position: relative;
    width: 20px;
    margin: 2px 0 0 8px;
    background-color: #fff;
    overflow: hidden;
}
.vtick {
    display: flex;
    align-items: center;
    justify-content: center;
    height: 55.5px;
    background:
        linear-gradient(#777, #777) 50% 0 / 7px 1px no-repeat,
        linear-gradient(#aaa, #aaa) 50% 25% / 3px 1px no-repeat,
        linear-gradient(#aaa, #aaa) 50% 75% / 3px 1px no-repeat;
}
.vtick b {
    font-weight: normal;
    font-size: 16px;
    line-height: 1;
    color: #555;
    transform: rotate(-90deg);
}
.vmark {
    position: absolute;
    left: 0;
    top: 193px;
    width: 20px;
    border-top: 1px dashed #d24726;
}
.slide {
    flex: 1;
    position: relative;
    margin-left: 85px;
    background-color: #fff;
    border: 1px solid #c6c6c6;
    border-right: none;
}
.big {
    width: 252px;
    height: 126px;
    border-width: 2px;
    font-size: 29px;
}
.b1 { left: 67px; top: 75px; }
.b2 {
    left: 378px;
    top: 153px;
    padding-left: 13px;
    letter-spacing: -0.5px;
}
.b3 { left: 67px; top: 267px; }
.pointer {
    position: absolute;
    left: 245px;
    top: 181px;
}
```
